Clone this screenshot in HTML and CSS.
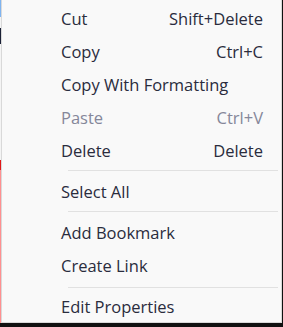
FILE: index.html
```html
<!DOCTYPE html>
<html lang="en">
<head>
  <meta charset="utf-8">
  <title>Context Menu</title>
  <link rel="stylesheet" href="styles.css">
</head>
<body>
  <div class="screen">
    <div class="backdrop"></div>
    <ul class="menu">
      <li class="item"><span>Cut</span><span class="keys">Shift+Delete</span></li>
      <li class="item"><span>Copy</span><span class="keys">Ctrl+C</span></li>
      <li class="item"><span>Copy With Formatting</span></li>
      <li class="item disabled"><span>Paste</span><span class="keys">Ctrl+V</span></li>
      <li class="item"><span>Delete</span><span class="keys">Delete</span></li>
      <li class="sep"></li>
      <li class="item"><span>Select All</span></li>
      <li class="sep"></li>
      <li class="item"><span>Add Bookmark</span></li>
      <li class="item"><span>Create Link</span></li>
      <li class="sep sep-low"></li>
      <li class="item"><span>Edit Properties</span></li>
    </ul>
  </div>
</body>
</html>
```

FILE: styles.css
```css
body {
  margin: 0;
  background-color: #111111;
  font-family: "Open Sans", "Noto Sans", sans-serif;
}

.screen {
  display: flex;
  align-items: flex-start;
  width: 283px;
  height: 327px;
}

.backdrop {
  width: 1px;
  height: 323px;
  background: linear-gradient(to bottom,
    #7fb4f0 0, #7fb4f0 17px, #f4f4f4 17px, #f4f4f4 28px,
    #1a2035 28px, #1a2035 44px, #f4f4f4 44px, #f4f4f4 160px,
    #e01818 160px, #e01818 170px, #ff9090 170px, #ff9090 323px);
}

.menu {
  list-style: none;
  margin: 0;
  padding: 2px 0 0;
  width: 279px;
  height: 320px;
  box-sizing: content-box;
  background-color: #f9f9f9;
  border: 1px solid #d9d9d9;
  border-top: none;
  color: #2a2c3d;
  font-size: 16.5px;
}

.item {
  display: flex;
  justify-content: space-between;
  align-items: center;
  height: 33px;
  padding: 0 18px 0 59px;
}

.item.disabled {
  color: #85879a;
}

.sep {
  height: 1px;
  margin: 3px 3px 4px 66px;
  background-color: #e1e1e1;
}

.sep-low {
  margin-top: 5px;
  margin-bottom: 2px;
}
```
